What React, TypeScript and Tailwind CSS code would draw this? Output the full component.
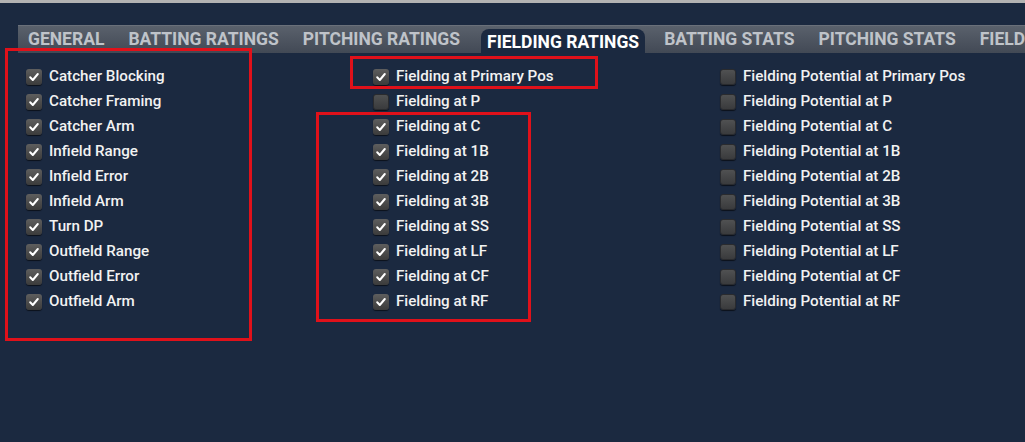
import React from 'react';

const tabs = [
  'General',
  'Batting Ratings',
  'Pitching Ratings',
  'Fielding Ratings',
  'Batting Stats',
  'Pitching Stats',
  'Fielding Stats',
];

const columns: { label: string; checked: boolean }[][] = [
  [
    { label: 'Catcher Blocking', checked: true },
    { label: 'Catcher Framing', checked: true },
    { label: 'Catcher Arm', checked: true },
    { label: 'Infield Range', checked: true },
    { label: 'Infield Error', checked: true },
    { label: 'Infield Arm', checked: true },
    { label: 'Turn DP', checked: true },
    { label: 'Outfield Range', checked: true },
    { label: 'Outfield Error', checked: true },
    { label: 'Outfield Arm', checked: true },
  ],
  [
    { label: 'Fielding at Primary Pos', checked: true },
    { label: 'Fielding at P', checked: false },
    { label: 'Fielding at C', checked: true },
    { label: 'Fielding at 1B', checked: true },
    { label: 'Fielding at 2B', checked: true },
    { label: 'Fielding at 3B', checked: true },
    { label: 'Fielding at SS', checked: true },
    { label: 'Fielding at LF', checked: true },
    { label: 'Fielding at CF', checked: true },
    { label: 'Fielding at RF', checked: true },
  ],
  [
    { label: 'Fielding Potential at Primary Pos', checked: false },
    { label: 'Fielding Potential at P', checked: false },
    { label: 'Fielding Potential at C', checked: false },
    { label: 'Fielding Potential at 1B', checked: false },
    { label: 'Fielding Potential at 2B', checked: false },
    { label: 'Fielding Potential at 3B', checked: false },
    { label: 'Fielding Potential at SS', checked: false },
    { label: 'Fielding Potential at LF', checked: false },
    { label: 'Fielding Potential at CF', checked: false },
    { label: 'Fielding Potential at RF', checked: false },
  ],
];

function Checkbox({ checked }: { checked: boolean }) {
  return (
    <div
      className={`w-[16px] h-[16px] rounded-[3px] flex items-center justify-center shrink-0 shadow-[0_1px_1px_rgba(0,0,0,0.6)] ${
        checked
          ? 'bg-gradient-to-b from-[#5e5e5e] to-[#3b3b3b]'
          : 'bg-gradient-to-b from-[#505152] to-[#3a3b3d] border border-[#2a2b2e]'
      }`}
    >
      {checked && (
        <svg width="12" height="12" viewBox="0 0 12 12">
          <path d="M2.2 6.3 L4.8 9 L9.8 3" fill="none" stroke="white" strokeWidth="2" strokeLinecap="round" strokeLinejoin="round" />
        </svg>
      )}
    </div>
  );
}

export default function App() {
  return (
    <div className="w-[1025px] h-[442px] overflow-hidden bg-[#1b2940] border-t-[3px] border-[#b3b3b3] font-['Roboto',sans-serif] relative">
      {/* Tab strip */}
      <div className="ml-[18px] mt-[22px] h-[28px] pl-[10px] flex items-end bg-gradient-to-b from-[#5a616c] to-[#424955] border-t border-[#6a707a] whitespace-nowrap">
        {tabs.map(tab =>
          tab === 'Fielding Ratings' ? (
            <div
              key={tab}
              className="h-[24px] ml-[-3px] mr-[19px] px-[6px] rounded-t-[8px] bg-[#1b2940] text-white text-[17.5px] font-bold uppercase leading-[26px]"
            >
              {tab}
            </div>
          ) : (
            <div
              key={tab}
              className="h-[27px] mr-[24px] text-[#bfc3c9] text-[17.5px] font-bold uppercase leading-[27px]"
            >
              {tab}
            </div>
          )
        )}
      </div>

      {/* Options */}
      <div className="pl-[26px] pt-[11px] grid grid-cols-[347px_347px_1fr]">
        {columns.map((col, i) => (
          <div key={i} className="flex flex-col">
            {col.map(item => (
              <div key={item.label} className="h-[25px] flex items-center gap-[7px]">
                <Checkbox checked={item.checked} />
                <span className="text-[15.2px] font-medium text-[#f2f2f2] whitespace-nowrap">{item.label}</span>
              </div>
            ))}
          </div>
        ))}
      </div>

      {/* Red annotation boxes */}
      <div className="absolute left-[5px] top-[45px] w-[247px] h-[293px] border-[3px] border-[#e0111a]" />
      <div className="absolute left-[350px] top-[53px] w-[248px] h-[33px] border-[3px] border-[#e0111a]" />
      <div className="absolute left-[316px] top-[109px] w-[215px] h-[210px] border-[3px] border-[#e0111a]" />
    </div>
  );
}
